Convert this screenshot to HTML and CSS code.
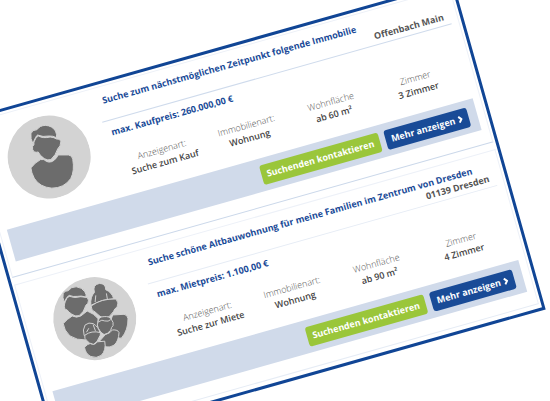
FILE: index.html
```html
<!DOCTYPE html>
<html lang="de">
<head>
    <meta charset="UTF-8">
    <meta name="viewport" content="width=device-width, initial-scale=1.0">
    <title>Immobiliengesuche</title>
    <link rel="stylesheet" href="styles.css">
</head>
<body>
    <main class="board">
        <article class="card">
            <div class="card-main">
                <svg class="avatar" viewBox="-125 -125 250 250" aria-hidden="true">
                    <circle class="avatar-bg" r="125"/>
                    <g class="people" transform="rotate(15.75) translate(-147 -203)">
                        <path d="M92 236Q104 220 121 211L131 211Q146 225 162 213Q170 206 174 197L205 197Q216 198 218 210Q224 245 212 268Q192 297 155 297Q118 294 102 267Q93 250 92 236Z"/>
                        <path d="M101 158Q108 140 115 140Q128 148 150 143Q163 144 169 149Q181 147 182 157Q182 171 173 178Q167 198 152 211Q142 214 132 208Q118 198 114 188Q101 192 97 180Q95 170 101 166Z"/>
                        <path d="M98 163Q90 148 92 133Q95 121 110 121Q119 108 136 108Q156 109 166 125Q171 136 169 145Q158 139 146 140Q128 144 112 137Q107 139 98 163Z"/>
                    </g>
                </svg>
                <div class="details">
                    <header class="card-head">
                        <h2 class="title">Suche zum nächstmöglichen Zeitpunkt folgende Immobilie</h2>
                        <p class="location">Offenbach Main</p>
                    </header>
                    <p class="price">max. Kaufpreis: 260.000,00 €</p>
                    <dl class="facts">
                        <div><dt>Anzeigenart:</dt><dd>Suche zum Kauf</dd></div>
                        <div><dt>Immobilienart:</dt><dd>Wohnung</dd></div>
                        <div><dt>Wohnfläche</dt><dd>ab 60 m²</dd></div>
                        <div><dt>Zimmer</dt><dd>3 Zimmer</dd></div>
                    </dl>
                </div>
            </div>
            <footer class="actions">
                <button type="button" class="btn btn-contact">Suchenden kontaktieren</button>
                <button type="button" class="btn btn-more">Mehr anzeigen
                    <svg class="chevron" viewBox="0 0 5 8" aria-hidden="true"><path d="M1 1L3.5 4L1 7"/></svg>
                </button>
            </footer>
        </article>

        <article class="card card-light">
            <div class="card-main">
                <svg class="avatar" viewBox="-125 -125 250 250" aria-hidden="true">
                    <circle class="avatar-bg" r="125"/>
                    <g class="people" transform="rotate(15.75) translate(-192 -174)">
                        <!-- Eltern -->
                        <path d="M246 163L280 161Q291 163 292 174Q293 208 272 233L236 230L236 190Z"/>
                        <path d="M180 134Q178 108 191 95Q184 72 206 68Q225 68 225 87Q243 94 249 114Q213 115 180 134Z"/>
                        <path d="M181 136Q212 113 256 115Q266 126 259 140Q252 142 248 153Q236 172 222 174Q208 170 193 154Q181 151 181 136Z"/>
                        <path d="M97 189Q108 176 124 166Q137 173 150 166L169 151Q190 159 202 174L200 200L165 238Q139 240 117 226Q99 209 97 189Z"/>
                        <path d="M103 123Q108 107 116 107Q132 113 149 108L169 110Q176 118 171 128L165 134Q160 154 145 165Q133 169 122 160Q112 154 109 148Q98 147 101 130Z"/>
                        <path d="M100 125Q94 109 97 98Q102 89 112 90Q120 78 136 78Q154 80 162 93Q168 103 165 109Q151 104 139 107Q127 109 115 104Q108 106 100 125Z"/>
                        <path class="strand" d="M195 104L193 124M227 98L230 116"/>
                        <!-- Kinder -->
                        <path d="M224 222Q239 218 245 208Q262 207 265 216Q264 242 250 254Q237 262 226 259L208 240Z"/>
                        <path d="M203 180Q204 168 220 168Q237 166 243 178Q249 184 247 195Q242 199 240 209Q230 221 220 222Q209 217 203 204Q196 194 203 180Z"/>
                        <path class="strand" d="M203 184Q214 175 222 181Q233 184 240 177"/>
                        <path d="M160 225Q154 207 163 193Q174 184 187 189Q204 199 208 218Z"/>
                        <path d="M162 224Q182 209 209 216Q210 225 205 230Q201 244 188 252Q174 249 167 239Q160 235 162 224Z"/>
                        <path d="M161 260Q171 250 178 249Q192 256 199 244L222 242Q227 270 211 285Q197 295 180 288Q164 280 161 260Z"/>
                        <path class="strand" d="M174 203L167 215M187 192L194 211"/>
                    </g>
                </svg>
                <div class="details">
                    <header class="card-head">
                        <h2 class="title">Suche schöne Altbauwohnung für meine Familien im Zentrum von Dresden</h2>
                        <p class="location">01139 Dresden</p>
                    </header>
                    <p class="price">max. Mietpreis: 1.100,00 €</p>
                    <dl class="facts">
                        <div><dt>Anzeigenart:</dt><dd>Suche zur Miete</dd></div>
                        <div><dt>Immobilienart:</dt><dd>Wohnung</dd></div>
                        <div><dt>Wohnfläche</dt><dd>ab 90 m²</dd></div>
                        <div><dt>Zimmer</dt><dd>4 Zimmer</dd></div>
                    </dl>
                </div>
            </div>
            <footer class="actions">
                <button type="button" class="btn btn-contact">Suchenden kontaktieren</button>
                <button type="button" class="btn btn-more">Mehr anzeigen
                    <svg class="chevron" viewBox="0 0 5 8" aria-hidden="true"><path d="M1 1L3.5 4L1 7"/></svg>
                </button>
            </footer>
        </article>
    </main>
</body>
</html>
```

FILE: styles.css
```css
* {
    margin: 0;
    padding: 0;
    box-sizing: border-box;
}

body {
    display: flow-root;
    height: 100vh;
    overflow: hidden;
    background: white;
    color: #555;
    font-family: 'Open Sans', 'Noto Sans', sans-serif;
    font-size: 9px;
    line-height: 12px;
}

/* the whole list is tilted */
.board {
    display: grid;
    gap: 7px;
    margin: 44px 41px 0 -1px;
    padding: 2px 2px 4px;
    border: 3px solid #104595;
    background: white;
    transform: rotate(-15.75deg);
}

.card {
    padding: 0 7px 14px;
    border: 1px solid #edf1f8;
    border-bottom-color: #cbd8ea;
}

.card-light {
    border-bottom-color: #e6ecf5;
}

.card-main {
    display: grid;
    grid-template-columns: 121px 1fr;
}

.avatar {
    width: 83px;
    height: 83px;
    margin-top: 12px;
    justify-self: center;
}

.avatar-bg {
    fill: #d3d3d3;
}

.people path {
    fill: #6c6c6c;
    stroke: #d3d3d3;
    stroke-width: 3;
    stroke-linejoin: round;
}

.people .strand {
    fill: none;
}

.card-head {
    padding: 8px 6px 2px;
    border-bottom: 1px solid #cfdbec;
}

.card-light .card-head {
    border-bottom-color: #e6ecf5;
}

.title {
    color: #1a4b98;
    font-size: 9px;
    font-weight: 700;
    white-space: nowrap;
}

.location {
    font-weight: 700;
    text-align: right;
}

.price {
    margin: 6px 6px 17px;
    color: #1a4b98;
    font-weight: 700;
}

.facts {
    display: grid;
    grid-template-columns: repeat(4, 1fr);
    margin: 0 6px 16px;
    line-height: 13px;
    text-align: center;
    white-space: nowrap;
}

.facts dt {
    font-weight: 300;
}

.facts dd {
    color: #444;
    font-weight: 600;
}

.actions {
    display: flex;
    justify-content: flex-end;
    align-items: center;
    gap: 6px;
    height: 33px;
    padding-right: 9px;
    background: #d0daea;
}

.btn {
    display: flex;
    align-items: center;
    gap: 3px;
    height: 20px;
    padding: 0 6px;
    border: none;
    border-radius: 3px;
    color: white;
    font: inherit;
    font-weight: 700;
    cursor: pointer;
}

.btn-contact {
    background: #9ac63a;
}

.btn-more {
    background: #194b97;
}

.chevron {
    width: 5px;
    height: 8px;
    fill: none;
    stroke: white;
    stroke-width: 2;
}
```
